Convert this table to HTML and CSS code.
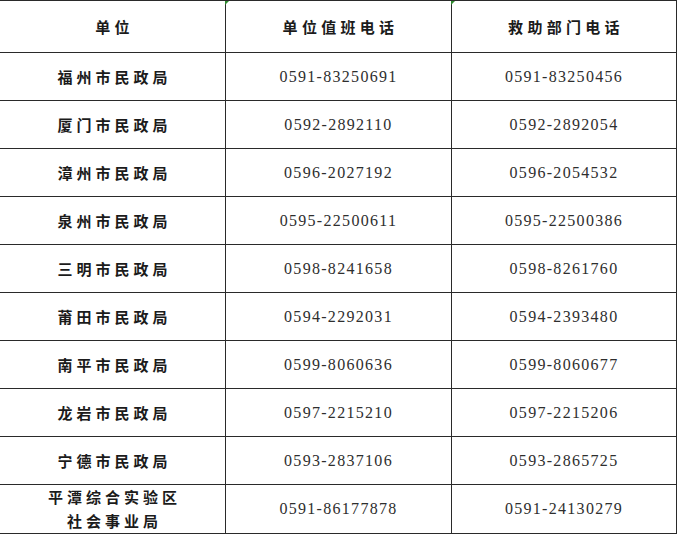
FILE: index.html
```html
<!DOCTYPE html>
<html lang="zh">
<head>
<meta charset="utf-8">
<link rel="stylesheet" href="styles.css">
</head>
<body>
<div class="table">
  <div class="cell head">单位</div>
  <div class="cell head mark">单位值班电话</div>
  <div class="cell head mark">救助部门电话</div>

  <div class="cell name">福州市民政局</div>
  <div class="cell num">0591-83250691</div>
  <div class="cell num">0591-83250456</div>

  <div class="cell name">厦门市民政局</div>
  <div class="cell num">0592-2892110</div>
  <div class="cell num">0592-2892054</div>

  <div class="cell name">漳州市民政局</div>
  <div class="cell num">0596-2027192</div>
  <div class="cell num">0596-2054532</div>

  <div class="cell name">泉州市民政局</div>
  <div class="cell num">0595-22500611</div>
  <div class="cell num">0595-22500386</div>

  <div class="cell name">三明市民政局</div>
  <div class="cell num">0598-8241658</div>
  <div class="cell num">0598-8261760</div>

  <div class="cell name">莆田市民政局</div>
  <div class="cell num">0594-2292031</div>
  <div class="cell num">0594-2393480</div>

  <div class="cell name">南平市民政局</div>
  <div class="cell num">0599-8060636</div>
  <div class="cell num">0599-8060677</div>

  <div class="cell name">龙岩市民政局</div>
  <div class="cell num">0597-2215210</div>
  <div class="cell num">0597-2215206</div>

  <div class="cell name">宁德市民政局</div>
  <div class="cell num">0593-2837106</div>
  <div class="cell num">0593-2865725</div>

  <div class="cell name two">平潭综合实验区<br>社会事业局</div>
  <div class="cell num">0591-86177878</div>
  <div class="cell num">0591-24130279</div>
</div>
</body>
</html>
```
FILE: styles.css
```css
html, body {
  margin: 0;
  padding: 0;
  background: #ffffff;
}

.table {
  width: 677px;
  display: grid;
  grid-template-columns: 226px 226px 225px;
  grid-template-rows: 52px repeat(9, 48px) 49px;
  border-top: 1px solid #2a2a2a;
  box-sizing: border-box;
}

.cell {
  position: relative;
  display: flex;
  align-items: center;
  justify-content: center;
  text-align: center;
  border-bottom: 1px solid #2a2a2a;
  border-right: 1px solid #2a2a2a;
  box-sizing: border-box;
  color: #1b1b1b;
}

.head {
  font-family: "Noto Sans CJK SC", sans-serif;
  font-weight: 700;
  font-size: 15px;
  letter-spacing: 4.3px;
  padding-left: 4px;
}

.name {
  font-family: "Noto Sans CJK SC", sans-serif;
  font-weight: 700;
  font-size: 15px;
  letter-spacing: 4px;
  padding-left: 4px;
}

.two {
  line-height: 24px;
}

.num {
  font-family: "Liberation Serif", "Noto Sans CJK SC", serif;
  font-size: 16px;
  letter-spacing: 1.3px;
  color: #2e2e2e;
}

.mark::before {
  content: "";
  position: absolute;
  left: -1px;
  top: 0;
  width: 0;
  height: 0;
  border-top: 4px solid #2f8a2f;
  border-right: 4px solid transparent;
}
```
